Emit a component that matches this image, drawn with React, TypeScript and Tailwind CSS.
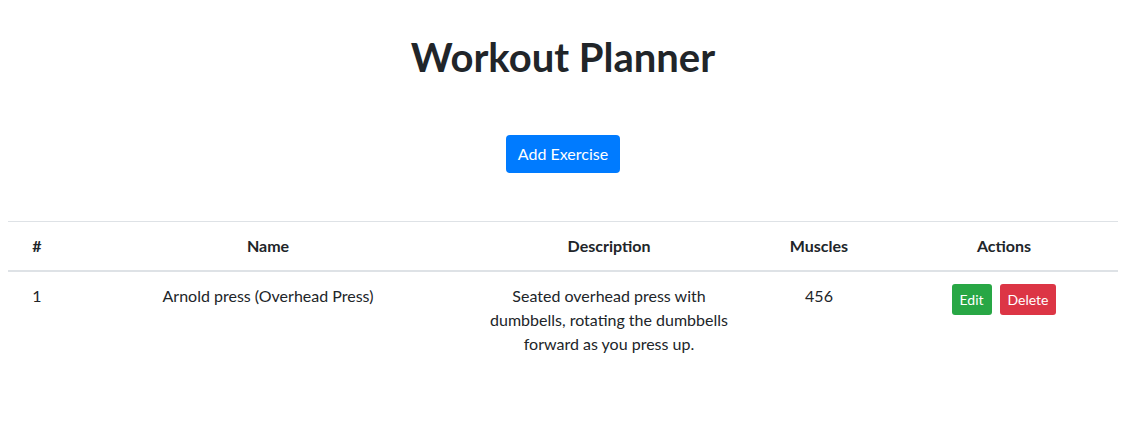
import React from 'react';

const exercises = [
  {
    id: 1,
    name: 'Arnold press (Overhead Press)',
    description: 'Seated overhead press with dumbbells, rotating the dumbbells forward as you press up.',
    muscles: '456',
  },
];

export default function App() {
  return (
    <div className="min-h-[435px] bg-white text-[#212529]" style={{ fontFamily: 'Lato, "Noto Sans", sans-serif' }}>
      <div className="ml-2 w-[1110px] text-center">
        <h1 className="pt-[33px] text-[40px] font-bold leading-[48px]">Workout Planner</h1>
        <div className="mt-[54px] flex justify-center">
          <button className="h-[38px] rounded-[4px] bg-[#007bff] px-3 text-base leading-6 text-white">Add Exercise</button>
        </div>
        <table className="mt-[48px] w-full border-collapse text-base">
          <thead>
            <tr className="border-t border-[#dee2e6]">
              <th className="w-[58px] border-b-2 border-[#dee2e6] px-3 py-3 font-bold leading-6">#</th>
              <th className="w-[404px] border-b-2 border-[#dee2e6] px-3 py-3 font-bold leading-6">Name</th>
              <th className="w-[278px] border-b-2 border-[#dee2e6] px-3 py-3 font-bold leading-6">Description</th>
              <th className="w-[142px] border-b-2 border-[#dee2e6] px-3 py-3 font-bold leading-6">Muscles</th>
              <th className="border-b-2 border-[#dee2e6] px-3 py-3 font-bold leading-6">Actions</th>
            </tr>
          </thead>
          <tbody>
            {exercises.map((ex) => (
              <tr key={ex.id} className="align-top">
                <td className="px-3 py-3 leading-6">{ex.id}</td>
                <td className="px-3 py-3 leading-6">{ex.name}</td>
                <td className="px-3 py-3 leading-6">{ex.description}</td>
                <td className="px-3 py-3 leading-6">{ex.muscles}</td>
                <td className="px-3 py-3 leading-6">
                  <div className="flex justify-center gap-2">
                    <button className="h-[31px] rounded-[3px] bg-[#28a745] px-2 text-sm leading-[21px] text-white">Edit</button>
                    <button className="h-[31px] rounded-[3px] bg-[#dc3545] px-2 text-sm leading-[21px] text-white">Delete</button>
                  </div>
                </td>
              </tr>
            ))}
          </tbody>
        </table>
      </div>
    </div>
  );
}
